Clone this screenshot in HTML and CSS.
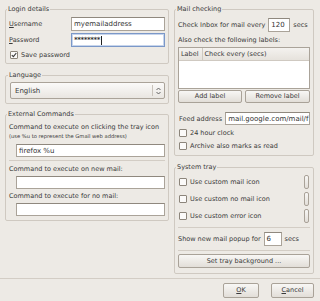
FILE: index.html
```html
<!DOCTYPE html>
<html lang="en">
<head>
    <meta charset="UTF-8">
    <title>Preferences</title>
    <link rel="stylesheet" href="styles.css">
</head>
<body>
    <div class="dialog">
        <div class="columns">
            <div class="col">
                <fieldset class="frame login">
                    <legend>Login details</legend>
                    <div class="form-grid">
                        <span class="lbl"><u>U</u>sername</span>
                        <div class="entry">myemailaddress</div>
                        <span class="lbl"><u>P</u>assword</span>
                        <div class="entry focus">********<span class="caret"></span></div>
                    </div>
                    <div class="check save">
                        <span class="box">
                            <svg width="6" height="6" viewBox="0 0 6 6"><path d="M0.8 3.1 L2.4 4.7 L5.3 1" fill="none" stroke="#3a3a3a" stroke-width="1.1"/></svg>
                        </span>
                        Save password
                    </div>
                </fieldset>

                <fieldset class="frame language">
                    <legend>Language</legend>
                    <div class="combo">
                        <span>English</span>
                        <span class="combo-arrows">
                            <svg width="5" height="8" viewBox="0 0 5 8"><path d="M0.5 3 L2.5 1 L4.5 3 M0.5 5 L2.5 7 L4.5 5" fill="none" stroke="#555" stroke-width="0.9"/></svg>
                        </span>
                    </div>
                </fieldset>

                <fieldset class="frame commands">
                    <legend>External Commands</legend>
                    <div class="cmd-label first">Command to execute on clicking the tray icon</div>
                    <div class="hint">(use %u to represent the Gmail web address)</div>
                    <div class="entry cmd-entry">firefox %u</div>
                    <div class="separator"></div>
                    <div class="cmd-label">Command to execute on new mail:</div>
                    <div class="entry cmd-entry"></div>
                    <div class="cmd-label">Command to execute for no mail:</div>
                    <div class="entry cmd-entry"></div>
                </fieldset>
            </div>

            <div class="col">
                <fieldset class="frame mail">
                    <legend>Mail checking</legend>
                    <div class="row check-every">
                        <span>Check Inbox for mail every</span>
                        <div class="entry num">120</div>
                        <span>secs</span>
                    </div>
                    <div class="also">Also check the following labels:</div>
                    <div class="list">
                        <div class="list-head">
                            <span class="col-label">Label</span>
                            <span class="col-every">Check every (secs)</span>
                        </div>
                    </div>
                    <div class="btn-pair">
                        <div class="btn">Add label</div>
                        <div class="btn">Remove label</div>
                    </div>
                    <div class="row feed">
                        <span>Feed address</span>
                        <div class="entry feed-entry">mail.google.com/mail/f</div>
                    </div>
                    <div class="check opt"><span class="box"></span>24 hour clock</div>
                    <div class="check opt"><span class="box"></span>Archive also marks as read</div>
                </fieldset>

                <fieldset class="frame tray">
                    <legend>System tray</legend>
                    <div class="tray-row">
                        <div class="check"><span class="box"></span>Use custom mail icon</div>
                        <div class="mini-btn"></div>
                    </div>
                    <div class="tray-row">
                        <div class="check"><span class="box"></span>Use custom no mail icon</div>
                        <div class="mini-btn"></div>
                    </div>
                    <div class="tray-row">
                        <div class="check"><span class="box"></span>Use custom error icon</div>
                        <div class="mini-btn"></div>
                    </div>
                    <div class="separator tray-sep"></div>
                    <div class="row popup">
                        <span>Show new mail popup for</span>
                        <div class="entry popup-num">6</div>
                        <span>secs</span>
                    </div>
                    <div class="separator tray-sep2"></div>
                    <div class="btn wide">Set tray background ...</div>
                </fieldset>
            </div>
        </div>

        <div class="hsep"></div>

        <div class="actions">
            <div class="btn action"><u>O</u>K</div>
            <div class="btn action cancel"><u>C</u>ancel</div>
        </div>
    </div>
</body>
</html>
```

FILE: styles.css
```css
* {
    margin: 0;
    padding: 0;
    box-sizing: border-box;
}

body {
    font-family: 'DejaVu Sans', 'Liberation Sans', sans-serif;
    font-size: 6.5px;
    color: #3a3a3a;
    background: #edeae5;
    width: 320px;
    height: 301px;
    overflow: hidden;
}

u {
    text-decoration: underline;
    text-underline-offset: 1px;
}

.dialog {
    padding: 0 6px 0 5px;
}

.columns {
    display: grid;
    grid-template-columns: 164px 140px;
    column-gap: 5px;
}

.col {
    display: flex;
    flex-direction: column;
}

/* frames */
.frame {
    border: 1px solid #cfc9c1;
    border-radius: 2px;
    padding: 0 3px 4px 3px;
    min-width: 0;
}

.frame legend {
    line-height: 8px;
    padding: 0 1px;
    margin-left: -2px;
    color: #3a3a3a;
}

.login, .mail {
    margin-top: 5px;
}

.language {
    margin-top: 7px;
    padding: 3px 3px 4px 4px;
}

.commands {
    margin-top: 6px;
}

.tray {
    margin-top: 7px;
    padding-bottom: 5px;
}

/* entries */
.entry {
    height: 14px;
    line-height: 12px;
    border: 1px solid #aaa399;
    border-top-color: #8f887e;
    background: #ffffff;
    padding: 0 2px;
    font-size: 7px;
    white-space: nowrap;
    overflow: hidden;
    color: #333;
}

.entry.focus {
    border-color: #7b98c8;
    box-shadow: inset 0 0 0 1px #c7d5ec;
    font-weight: bold;
    letter-spacing: -0.4px;
}

.caret {
    display: inline-block;
    width: 1px;
    height: 9px;
    background: #222;
    vertical-align: middle;
    margin-left: 1px;
}

/* login */
.form-grid {
    display: grid;
    grid-template-columns: 62px 1fr;
    row-gap: 2px;
    padding-top: 4px;
    align-items: center;
}

.check {
    display: flex;
    align-items: center;
    gap: 3px;
    white-space: nowrap;
}

.box {
    width: 8px;
    height: 8px;
    border: 1px solid #8c857b;
    background: #fbfaf9;
    border-radius: 1px;
    display: flex;
    align-items: center;
    justify-content: center;
    flex: none;
}

.save {
    margin-top: 3px;
    height: 9px;
    padding-left: 1px;
}

/* language */
.combo {
    height: 17px;
    border: 1px solid #aaa399;
    border-radius: 2px;
    background: linear-gradient(#fbfaf9, #e9e6e1);
    display: flex;
    align-items: center;
    justify-content: space-between;
    padding-left: 4px;
    font-size: 7px;
}

.combo-arrows {
    height: 11px;
    border-left: 1px solid #c9c3bb;
    padding: 1px 3px 0 3px;
    display: flex;
    align-items: center;
}

/* external commands */
.cmd-label {
    line-height: 10px;
    margin-top: 2px;
    white-space: nowrap;
}

.cmd-label.first {
    margin-top: 4px;
}

.hint {
    font-size: 5.2px;
    line-height: 8px;
}

.cmd-entry {
    margin-left: 7px;
    margin-top: 2px;
    height: 13px;
}

.hint + .cmd-entry {
    margin-top: 4px;
}

.separator {
    height: 1px;
    background: #d3cdc5;
    margin-top: 3px;
    margin-bottom: 3px;
}

/* mail checking */
.row {
    display: flex;
    align-items: center;
    gap: 3px;
    white-space: nowrap;
}

.check-every {
    margin-top: 5px;
}

.num {
    width: 22px;
    font-size: 7px;
}

.also {
    line-height: 10px;
    margin-top: 3px;
}

.list {
    height: 42px;
    margin-top: 2px;
    border: 1px solid #aaa399;
    background: #ffffff;
}

.list-head {
    display: flex;
    height: 13px;
    line-height: 12px;
    background: linear-gradient(#f4f2ef, #e6e2dc);
    border-bottom: 1px solid #cfc9c1;
}

.col-label {
    padding: 0 3px 0 2px;
    border-right: 1px solid #cfc9c1;
}

.col-every {
    padding-left: 2px;
}

.btn {
    height: 14px;
    border: 1px solid #a9a298;
    border-radius: 2px;
    background: linear-gradient(#f8f7f5, #e2ded8);
    text-align: center;
    line-height: 12px;
    white-space: nowrap;
}

.btn-pair {
    display: grid;
    grid-template-columns: 64px 65px;
    column-gap: 3px;
    margin-top: 1px;
}

.btn-pair .btn {
    height: 13px;
    line-height: 11px;
}

.feed {
    margin-top: 9px;
    padding-left: 1px;
}

.feed-entry {
    flex: 1;
    height: 13px;
    text-overflow: clip;
}

.opt {
    height: 11px;
    margin-top: 2px;
    padding-left: 1px;
}

/* system tray */
.tray-row {
    display: flex;
    justify-content: space-between;
    align-items: center;
    height: 14px;
    margin-top: 3px;
    padding-left: 1px;
}

.tray legend + .tray-row {
    margin-top: 4px;
}

.mini-btn {
    width: 5px;
    height: 14px;
    border: 1px solid #a9a298;
    border-radius: 2px;
    background: linear-gradient(#f8f7f5, #e2ded8);
    margin-right: 1px;
}

.tray-sep {
    margin-top: 4px;
    margin-bottom: 0;
}

.popup {
    margin-top: 4px;
    height: 14px;
}

.popup-num {
    width: 18px;
}

.tray-sep2 {
    margin-top: 4px;
    margin-bottom: 0;
}

.wide {
    margin-top: 3px;
}

/* bottom */
.hsep {
    height: 1px;
    background: #d3cdc5;
    margin: 4px -6px 0 -5px;
}

.actions {
    display: flex;
    justify-content: flex-end;
    gap: 12px;
    margin-top: 4px;
}

.action {
    width: 36px;
    height: 15px;
    line-height: 13px;
}

.cancel {
    width: 43px;
}
```
